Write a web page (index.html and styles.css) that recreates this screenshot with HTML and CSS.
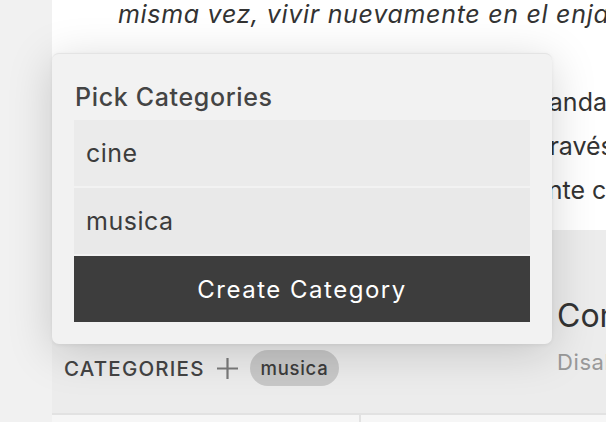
FILE: index.html
```html
<!DOCTYPE html>
<html lang="es">
<head>
<meta charset="utf-8">
<link rel="stylesheet" href="styles.css">
</head>
<body>
<div class="page">
  <aside class="sidebar"></aside>
  <main class="main">
    <section class="article">
      <p class="quote">misma vez, vivir nuevamente en el enjambre de la ciudad</p>
      <div class="lines">
        <p class="line">de las calles por donde ella siempre andaba sin rumbo</p>
        <p class="line">y recorrer sus barrios que miraba a través del tiempo</p>
        <p class="line">para poder encontrarse aquí finalmente con su gente</p>
      </div>
    </section>
    <section class="lower">
      <div class="lower-left">
        <div class="cat-row">
          <span class="cat-label">CATEGORIES</span>
          <svg class="plus" width="21" height="21" viewBox="0 0 21 21"><path d="M10.5 0v21M0 10.5h21" stroke="#7a7a7a" stroke-width="2.2" fill="none"/></svg>
          <span class="tag">musica</span>
        </div>
      </div>
      <div class="lower-right">
        <h2 class="comments-title">Comentarios</h2>
        <p class="comments-sub">Disabled comments</p>
      </div>
    </section>
    <footer class="footer">
      <div class="foot-left"></div>
      <div class="foot-right"></div>
    </footer>
  </main>
</div>
<div class="popover">
  <h3 class="pop-title">Pick Categories</h3>
  <ul class="pop-list">
    <li class="pop-item">cine</li>
    <li class="pop-item">musica</li>
  </ul>
  <button class="pop-btn">Create Category</button>
</div>
</body>
</html>
```
FILE: styles.css
```css
* { box-sizing: border-box; }
html, body { margin: 0; padding: 0; }
body {
  width: 606px;
  height: 422px;
  overflow: hidden;
  font-family: Inter, "Open Sans", sans-serif;
  color: #444;
  background: #efefef;
  position: relative;
}
.page {
  display: flex;
  height: 422px;
}
.sidebar {
  width: 52px;
  flex: none;
  background: #f1f1f1;
}
.main {
  flex: 1;
  display: flex;
  flex-direction: column;
  background: #ffffff;
  min-width: 0;
}
.article {
  height: 230px;
  padding-left: 66px;
  overflow: hidden;
}
.quote {
  margin: -1px 0 0;
  font-size: 25px;
  letter-spacing: 0.7px;
  line-height: 30px;
  font-style: italic;
  white-space: nowrap;
  color: #333;
}
.lines { margin-top: 51px; }
.line {
  margin: 0;
  font-size: 25px;
  line-height: 44px;
  white-space: nowrap;
  color: #333;
}
.lower {
  flex: 1;
  display: flex;
  background: #ececec;
}
.lower-left {
  width: 500px;
  flex: none;
  padding: 120px 0 0 12px;
}
.cat-row {
  display: flex;
  align-items: center;
  height: 36px;
}
.cat-label {
  font-size: 20.5px;
  letter-spacing: 1.2px;
  font-weight: 500;
  color: #444;
}
.plus { margin-left: 12px; }
.tag {
  margin-left: 12px;
  height: 36px;
  padding: 0 11px;
  border-radius: 18px;
  background: #c8c8c8;
  font-size: 18.5px;
  letter-spacing: 0.7px;
  font-weight: 500;
  display: flex;
  align-items: center;
  color: #3c3c3c;
}
.lower-right {
  flex: 1;
  padding: 66px 0 0 5px;
  white-space: nowrap;
  overflow: hidden;
}
.comments-title {
  margin: 0;
  font-size: 32px;
  font-weight: 400;
  line-height: 40px;
  color: #333;
}
.comments-sub {
  margin: 12px 0 0;
  font-size: 22px;
  letter-spacing: 0.6px;
  line-height: 28px;
  color: #999;
}
.footer {
  height: 9px;
  flex: none;
  display: flex;
  border-top: 2px solid #e2e2e2;
  background: #f6f6f6;
}
.foot-left { width: 309px; border-right: 2px solid #e2e2e2; }
.foot-right { flex: 1; }
.popover {
  position: absolute;
  left: 52px;
  top: 53px;
  width: 500px;
  height: 291px;
  background: #f2f2f2;
  border-radius: 7px;
  border-top: 1px solid #e4e4e4;
  padding: 22px 22px 22px;
  box-shadow: 0 8px 45px rgba(0,0,0,0.17), 0 1px 4px rgba(0,0,0,0.06);
  display: flex;
  flex-direction: column;
}
.pop-title {
  margin: 6px 0 8px 1px;
  font-size: 25px;
  letter-spacing: 0.65px;
  line-height: 30px;
  font-weight: 500;
  color: #444;
}
.pop-list {
  list-style: none;
  margin: 0;
  padding: 0;
  display: flex;
  flex-direction: column;
  gap: 2px;
}
.pop-item {
  height: 66px;
  background: #e9e9e9;
  font-size: 25px;
  letter-spacing: 0.5px;
  padding-left: 12px;
  display: flex;
  align-items: center;
  color: #3c3c3c;
}
.pop-item:first-child { background: #ebebeb; }
.pop-btn {
  margin-top: 2px;
  height: 66px;
  border: 0;
  background: #3d3d3d;
  color: #fff;
  font-family: inherit;
  font-size: 24px;
  letter-spacing: 1.5px;
  padding: 0;
}
```
